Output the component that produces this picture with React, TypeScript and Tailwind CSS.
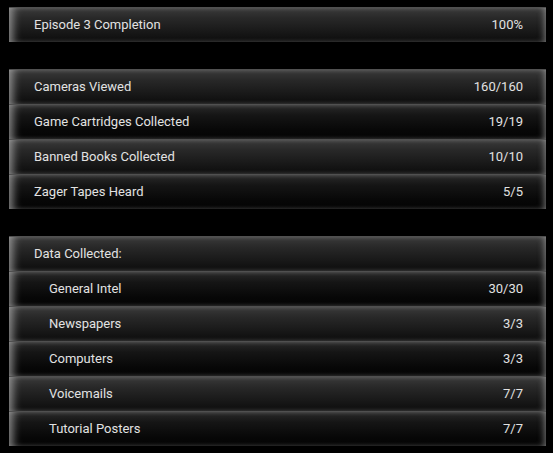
type Row = { label: string; value?: string; indent?: boolean };

const groups: Row[][] = [
  [{ label: "Episode 3 Completion", value: "100%" }],
  [
    { label: "Cameras Viewed", value: "160/160" },
    { label: "Game Cartridges Collected", value: "19/19" },
    { label: "Banned Books Collected", value: "10/10" },
    { label: "Zager Tapes Heard", value: "5/5" },
  ],
  [
    { label: "Data Collected:" },
    { label: "General Intel", value: "30/30", indent: true },
    { label: "Newspapers", value: "3/3", indent: true },
    { label: "Computers", value: "3/3", indent: true },
    { label: "Voicemails", value: "7/7", indent: true },
    { label: "Tutorial Posters", value: "7/7", indent: true },
  ],
];

function StatRow({ row, light }: { row: Row; light: boolean }) {
  return (
    <div
      className={`h-[35px] flex items-center justify-between pr-[23px] border-t border-[#505050] shadow-[inset_8px_0_9px_-4px_rgba(210,210,210,0.6),inset_-5px_0_6px_-3px_rgba(200,200,200,0.5)] ${
        light
          ? "bg-[linear-gradient(to_bottom,#3a3a3a_0%,#282828_30%,#161616_75%,#0c0c0c_100%)]"
          : "bg-[linear-gradient(to_bottom,#2a2a2a_0%,#151515_30%,#070707_75%,#040404_100%)]"
      } ${row.indent ? "pl-[40px]" : "pl-[25px]"}`}
    >
      <span>{row.label}</span>
      {row.value && <span>{row.value}</span>}
    </div>
  );
}

export default function App() {
  return (
    <div className="w-[553px] h-[453px] bg-black pt-[7px] pl-[9px] pr-[7px] flex flex-col gap-[27px] text-[13px] text-[#e2e2e2] font-['Roboto',sans-serif]">
      {groups.map((group, gi) => (
        <div key={gi} className="flex flex-col">
          {group.map((row, i) => (
            <StatRow key={row.label} row={row} light={i % 2 === 0} />
          ))}
        </div>
      ))}
    </div>
  );
}
